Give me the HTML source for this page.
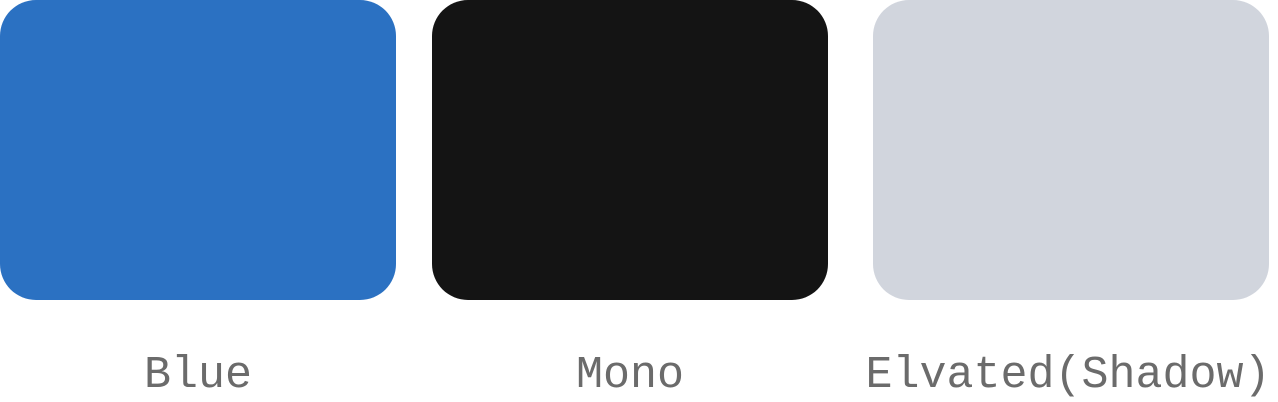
<!DOCTYPE html>
<html><head><meta charset="utf-8"><style>
html,body{margin:0;padding:0;background:#fff;width:1278px;height:402px;overflow:hidden;position:relative}
.b{position:absolute;top:0;width:396px;height:300px;border-radius:36px}
.l{position:absolute;top:348px;width:500px;text-align:center;font-family:"Liberation Mono",monospace;font-size:45px;color:#6b6b6b;line-height:56px}
</style></head><body>
<div class="b" style="left:0;background:#2b71c2"></div>
<div class="b" style="left:432px;background:#141414"></div>
<div class="b" style="left:873px;background:#d1d5dd"></div>
<div class="l" style="left:-52px">Blue</div>
<div class="l" style="left:380px">Mono</div>
<div class="l" style="left:818px">Elvated(Shadow)</div>
</body></html>
